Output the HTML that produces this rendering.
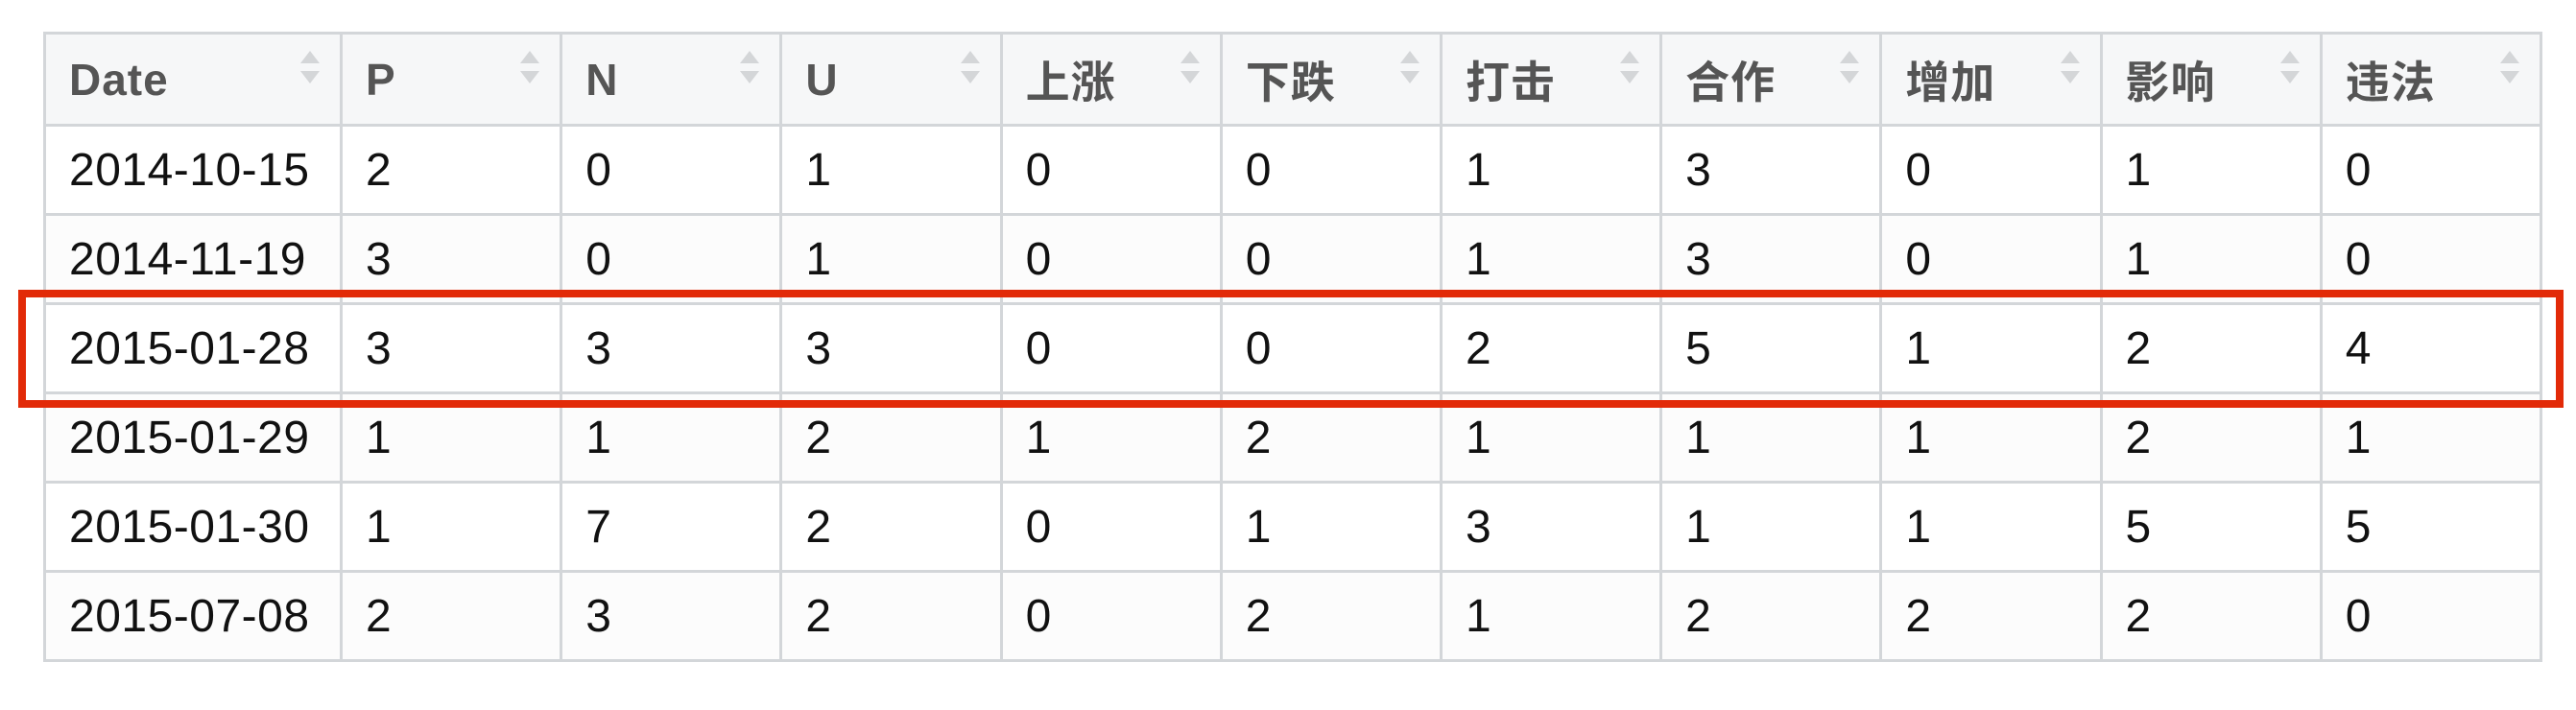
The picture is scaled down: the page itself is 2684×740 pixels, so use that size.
<!DOCTYPE html>
<html><head><meta charset="utf-8">
<style>
html,body{margin:0;padding:0;background:#fff;width:2684px;height:740px;overflow:hidden;}
table{position:absolute;left:45px;top:33px;border-collapse:collapse;table-layout:fixed;width:2604px;
 font-family:"Liberation Sans","Noto Sans CJK SC",sans-serif;font-size:48px;letter-spacing:0.5px;}
td,th{border:3px solid #d3d6d9;padding:0 0 0 24px;text-align:left;color:#111;white-space:nowrap;position:relative;}
th{height:93px;background:#f6f7f8;color:#555;font-weight:bold;font-size:46px;letter-spacing:1px;}
td{height:90px;}
tr:nth-child(odd) td{background:#fcfcfc;}
tr.w td{background:#fff;}
.s{position:absolute;right:20px;top:17px;width:22px;height:34px;}
.box{position:absolute;left:19px;top:302px;width:2636px;height:107px;border:8px solid #e22a08;}
</style></head><body>
<table>
<colgroup><col style="width:309px"><col><col><col><col><col><col><col><col><col><col></colgroup>
<tr>
<th>Date<svg class="s" viewBox="0 0 22 34"><path d="M11 0 L21 13 L1 13Z M11 34 L21 21 L1 21Z" fill="#d4d6d8"/></svg></th>
<th>P<svg class="s" viewBox="0 0 22 34"><path d="M11 0 L21 13 L1 13Z M11 34 L21 21 L1 21Z" fill="#d4d6d8"/></svg></th>
<th>N<svg class="s" viewBox="0 0 22 34"><path d="M11 0 L21 13 L1 13Z M11 34 L21 21 L1 21Z" fill="#d4d6d8"/></svg></th>
<th>U<svg class="s" viewBox="0 0 22 34"><path d="M11 0 L21 13 L1 13Z M11 34 L21 21 L1 21Z" fill="#d4d6d8"/></svg></th>
<th>上涨<svg class="s" viewBox="0 0 22 34"><path d="M11 0 L21 13 L1 13Z M11 34 L21 21 L1 21Z" fill="#d4d6d8"/></svg></th>
<th>下跌<svg class="s" viewBox="0 0 22 34"><path d="M11 0 L21 13 L1 13Z M11 34 L21 21 L1 21Z" fill="#d4d6d8"/></svg></th>
<th>打击<svg class="s" viewBox="0 0 22 34"><path d="M11 0 L21 13 L1 13Z M11 34 L21 21 L1 21Z" fill="#d4d6d8"/></svg></th>
<th>合作<svg class="s" viewBox="0 0 22 34"><path d="M11 0 L21 13 L1 13Z M11 34 L21 21 L1 21Z" fill="#d4d6d8"/></svg></th>
<th>增加<svg class="s" viewBox="0 0 22 34"><path d="M11 0 L21 13 L1 13Z M11 34 L21 21 L1 21Z" fill="#d4d6d8"/></svg></th>
<th>影响<svg class="s" viewBox="0 0 22 34"><path d="M11 0 L21 13 L1 13Z M11 34 L21 21 L1 21Z" fill="#d4d6d8"/></svg></th>
<th>违法<svg class="s" viewBox="0 0 22 34"><path d="M11 0 L21 13 L1 13Z M11 34 L21 21 L1 21Z" fill="#d4d6d8"/></svg></th>
</tr>
<tr class="w"><td>2014-10-15</td><td>2</td><td>0</td><td>1</td><td>0</td><td>0</td><td>1</td><td>3</td><td>0</td><td>1</td><td>0</td></tr>
<tr><td>2014-11-19</td><td>3</td><td>0</td><td>1</td><td>0</td><td>0</td><td>1</td><td>3</td><td>0</td><td>1</td><td>0</td></tr>
<tr class="w"><td>2015-01-28</td><td>3</td><td>3</td><td>3</td><td>0</td><td>0</td><td>2</td><td>5</td><td>1</td><td>2</td><td>4</td></tr>
<tr><td>2015-01-29</td><td>1</td><td>1</td><td>2</td><td>1</td><td>2</td><td>1</td><td>1</td><td>1</td><td>2</td><td>1</td></tr>
<tr class="w"><td>2015-01-30</td><td>1</td><td>7</td><td>2</td><td>0</td><td>1</td><td>3</td><td>1</td><td>1</td><td>5</td><td>5</td></tr>
<tr><td>2015-07-08</td><td>2</td><td>3</td><td>2</td><td>0</td><td>2</td><td>1</td><td>2</td><td>2</td><td>2</td><td>0</td></tr>
</table>
<div class="box"></div>
</body></html>
